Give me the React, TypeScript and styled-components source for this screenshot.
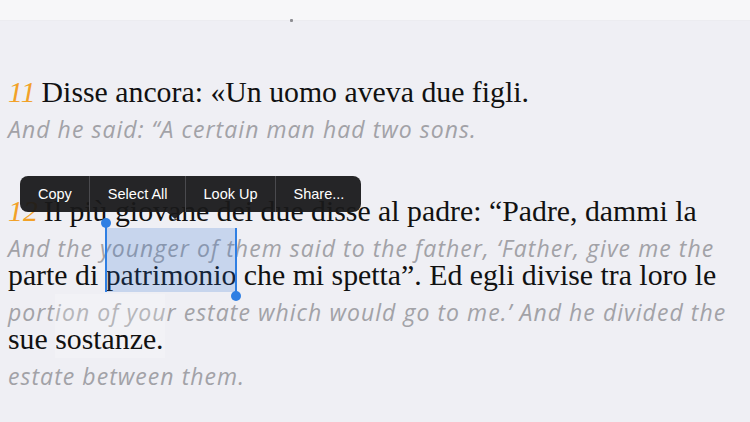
import React from 'react';
import styled, {createGlobalStyle} from 'styled-components';

const GlobalStyle = createGlobalStyle`
    html, body {
        margin: 0;
        padding: 0;
        background: #efeff4;
    }
`;

interface Line {
    it: React.ReactNode;
    en: string;
}

interface Verse {
    num: string;
    gap: number;
    lines: Line[];
}

export default function App() {
    const verses: Verse[] = [
        {
            num: '11',
            gap: 59,
            lines: [
                {it: 'Disse ancora: «Un uomo aveva due figli.', en: 'And he said: “A certain man had two sons.'},
            ],
        },
        {
            num: '12',
            gap: 55,
            lines: [
                {it: 'Il più giovane dei due disse al padre: “Padre, dammi la', en: 'And the younger of them said to the father, ‘Father, give me the'},
                {
                    it: (
                        <>
                            {'parte di '}
                            <Selected>
                                {'patrimonio'}
                                <Highlight/>
                                <StartHandle/>
                                <EndHandle/>
                            </Selected>
                            {' che mi spetta”. Ed egli divise tra loro le'}
                        </>
                    ),
                    en: 'portion of your estate which would go to me.’ And he divided the',
                },
                {it: 'sue sostanze.', en: 'estate between them.'},
            ],
        },
    ];

    return (
        <Page>
            <GlobalStyle/>
            <TopBar>
                <Dot/>
            </TopBar>
            <Reader>
                {verses.map((v) => (
                    <VerseBlock
                        key={v.num}
                        $gap={v.gap}
                    >
                        {v.lines.map((l, i) => (
                            <React.Fragment key={i}>
                                <ItalianLine>
                                    {i === 0 && <VerseNum>{v.num}</VerseNum>}
                                    {l.it}
                                </ItalianLine>
                                <EnglishLine>{l.en}</EnglishLine>
                            </React.Fragment>
                        ))}
                    </VerseBlock>
                ))}
                <Loupe/>
            </Reader>
            <EditMenu>
                <MenuItem>{'Copy'}</MenuItem>
                <MenuItem>{'Select All'}</MenuItem>
                <MenuItem>{'Look Up'}</MenuItem>
                <MenuItem>{'Share...'}</MenuItem>
                <MenuTail/>
            </EditMenu>
        </Page>
    );
}

const Page = styled.div`
    position: relative;
    width: 750px;
    height: 422px;
    overflow: hidden;
    background: #efeff4;
`;

const TopBar = styled.div`
    position: relative;
    height: 20px;
    background: #f7f7f9;
    border-bottom: 1px solid #ececf0;
`;

const Dot = styled.div`
    position: absolute;
    left: 290px;
    top: 19px;
    width: 3px;
    height: 3px;
    border-radius: 1px;
    background: #8e8e93;
`;

const Reader = styled.div`
    position: relative;
    padding: 0 8px;
`;

const VerseBlock = styled.div<{$gap: number}>`
    display: flex;
    flex-direction: column;
    padding-top: ${(p) => p.$gap}px;
`;

// line box is taller than the text so the glyphs sit a little high
const ItalianLine = styled.div`
    position: relative;
    z-index: 1;
    height: 30px;
    line-height: 24px;
    font-family: 'Liberation Serif', serif;
    font-size: 29.8px;
    color: #111;
    white-space: nowrap;
`;

const VerseNum = styled.span`
    font-style: italic;
    color: #f2a127;
    margin-right: 6px;
`;

const EnglishLine = styled.div`
    height: 29px;
    padding-top: 5px;
    line-height: 29px;
    font-family: 'Open Sans', 'Liberation Sans', sans-serif;
    font-style: italic;
    font-size: 23px;
    letter-spacing: 1.05px;
    color: #a2a2a7;
    white-space: nowrap;
`;

const Selected = styled.span`
    position: relative;
`;

const Highlight = styled.span`
    position: absolute;
    left: 0;
    right: 0;
    top: -30px;
    bottom: -1px;
    background: rgba(40, 110, 210, 0.2);
`;

const handleColor = '#2f7fe3';

const StartHandle = styled.span`
    position: absolute;
    left: -1px;
    top: -37px;
    bottom: -1px;
    width: 2px;
    background: ${handleColor};

    &::before {
        content: '';
        position: absolute;
        left: -4px;
        top: -3px;
        width: 10px;
        height: 10px;
        border-radius: 50%;
        background: ${handleColor};
    }
`;

const EndHandle = styled.span`
    position: absolute;
    right: -1px;
    top: -30px;
    bottom: -6px;
    width: 2px;
    background: ${handleColor};

    &::after {
        content: '';
        position: absolute;
        left: -4px;
        bottom: -4px;
        width: 10px;
        height: 10px;
        border-radius: 50%;
        background: ${handleColor};
    }
`;

const Loupe = styled.div`
    position: absolute;
    left: 55px;
    top: 273px;
    width: 110px;
    height: 64px;
    background: rgba(255, 255, 255, 0.22);
`;

const EditMenu = styled.div`
    position: absolute;
    z-index: 5;
    left: 20px;
    top: 176px;
    height: 36px;
    display: flex;
    align-items: stretch;
    background: rgba(24, 24, 26, 0.94);
    border-radius: 8px;
`;

const MenuItem = styled.div`
    display: flex;
    align-items: center;
    padding: 0 17px 0 18px;
    font-family: 'Liberation Sans', Arial, sans-serif;
    font-size: 14.5px;
    color: #fff;
    border-left: 1px solid #4a4a4e;

    &:first-child {
        border-left: none;
    }
`;

const MenuTail = styled.div`
    position: absolute;
    left: 147px;
    bottom: -7px;
    width: 0;
    height: 0;
    border-left: 8px solid transparent;
    border-right: 8px solid transparent;
    border-top: 7px solid rgba(24, 24, 26, 0.94);
`;
